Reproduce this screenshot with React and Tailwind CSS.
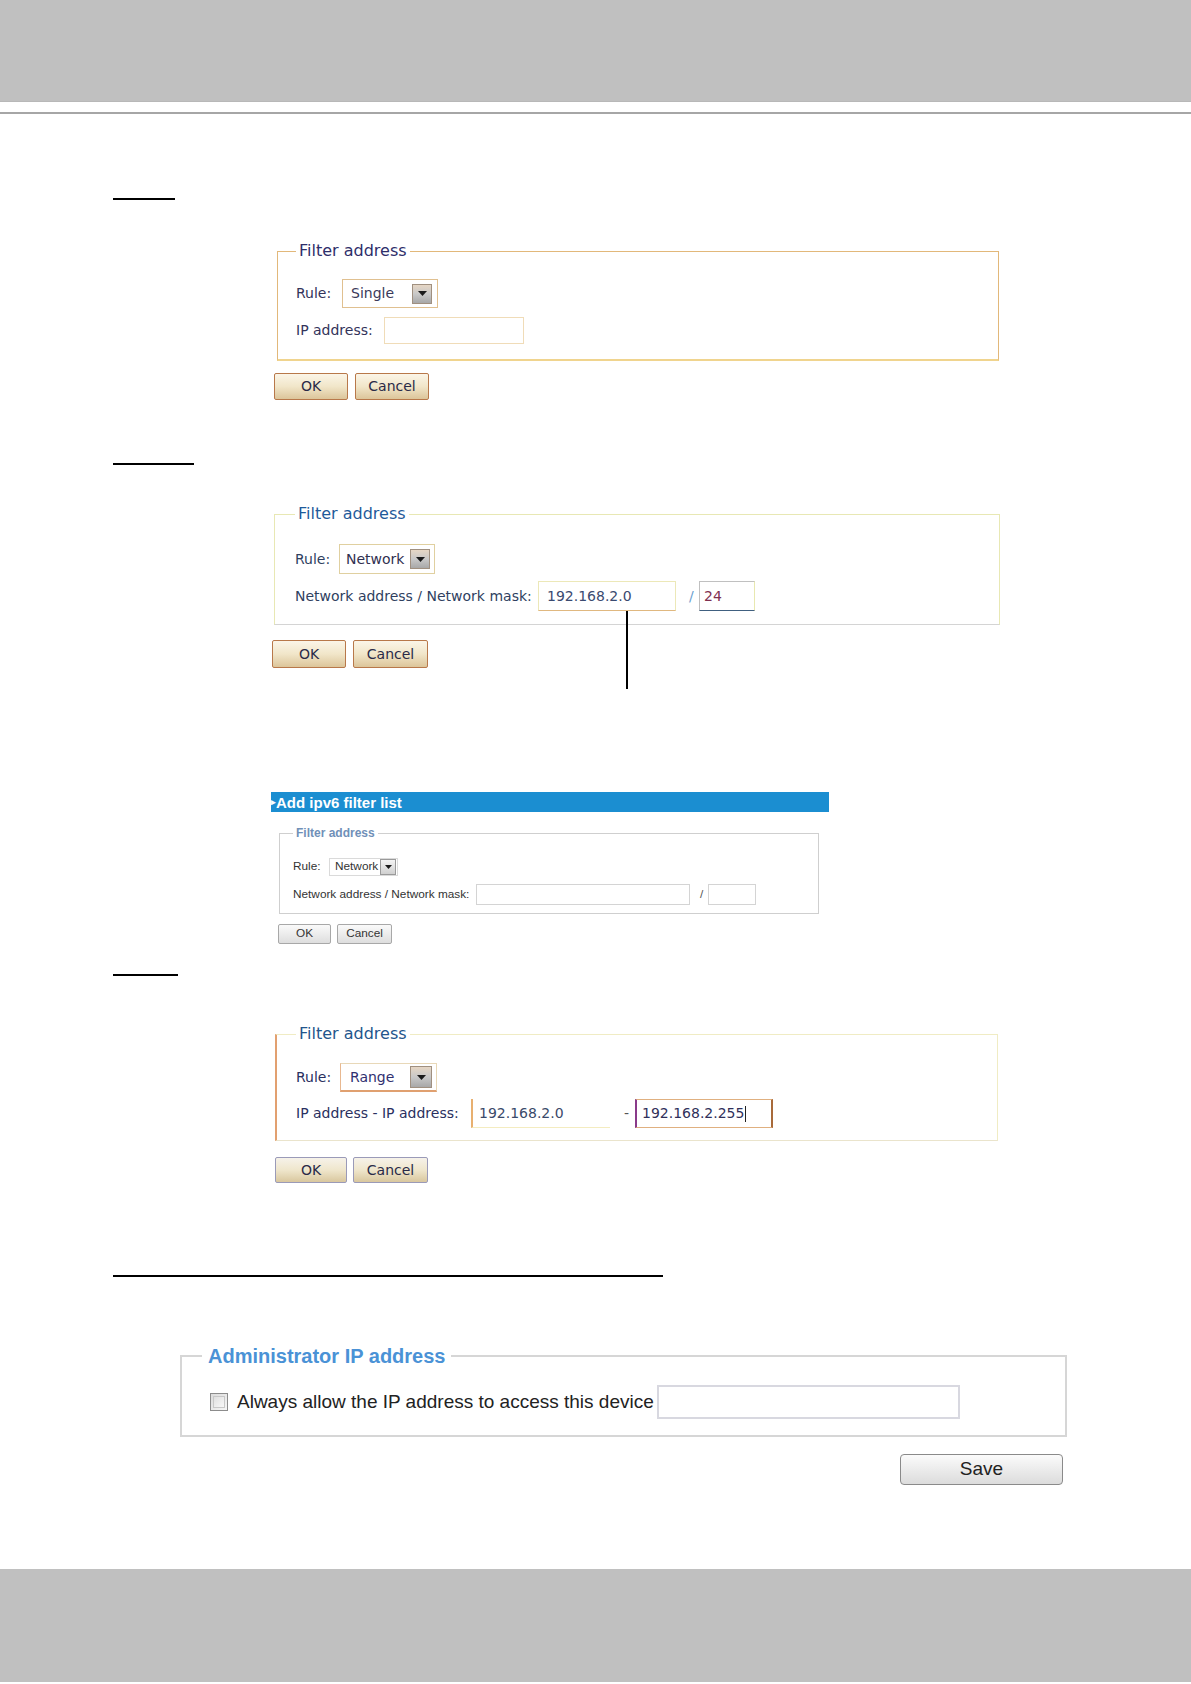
const dv = { fontFamily: '"DejaVu Sans", Verdana, sans-serif' };
const lib = { fontFamily: '"Liberation Sans", Arial, sans-serif' };

const Arrow = ({ size = 20, small = false }) => (
  <div
    className={`flex items-center justify-center border ${small ? 'border-[#9a9a9a] bg-linear-to-b from-[#f4f4f4] to-[#d0d0d0]' : 'border-[#a09080] bg-linear-to-b from-[#e6d6c4] via-[#c8c8c8] to-[#a8a8a8]'}`}
    style={{ width: size, height: size }}
  >
    <svg width={small ? 7 : 9} height={small ? 4 : 5} viewBox="0 0 9 5">
      <path d="M0 0 L9 0 L4.5 5 Z" fill="#1a1a1a" />
    </svg>
  </div>
);

const OldButton = ({ children, w, h, tone = 'orange' }) => (
  <div
    className={`flex items-center justify-center rounded-[2px] border text-[14px] text-[#2a2a48] ${
      tone === 'orange'
        ? 'border-[#b8784a] bg-linear-to-b from-[#fbf5e8] via-[#f1e6c9] to-[#dcc59a]'
        : 'border-[#9a9ab8] bg-linear-to-b from-[#f6f2ea] via-[#efe6cc] to-[#d9c79e]'
    }`}
    style={{ ...dv, width: w, height: h }}
  >
    {children}
  </div>
);

const Underline = ({ w, mt }) => (
  <div className="ml-[113px] h-[2px] bg-black" style={{ width: w, marginTop: mt }} />
);

export default function App() {
  return (
    <div className="w-[1191px] bg-white">
      {/* header band */}
      <div className="h-[102px] bg-[#c0c0c0] border-b border-[#b8b8b8]" />
      <div className="mt-[10px] h-[2px] bg-[#a6a6a6]" />

      {/* Single */}
      <Underline w={62} mt={84} />
      <fieldset
        className="mt-[42px] ml-[277px] w-[722px] h-[119px] border border-[#e2b87a] border-b-2 border-b-[#f0d48e] pl-[18px]"
        style={dv}
      >
        <legend className="px-[3px] text-[16px] leading-[18px] text-[#2e2e6a]">Filter address</legend>
        <div className="mt-[19px] flex items-center text-[14px] text-[#33335a]">
          <span className="w-[46px]">Rule:</span>
          <div className="flex h-[29px] w-[96px] items-center justify-between border border-[#e0c090] pl-[8px] pr-[5px] text-[#3a3a5a]">
            <span>Single</span>
            <Arrow />
          </div>
        </div>
        <div className="mt-[9px] flex items-center text-[14px] text-[#33335a]">
          <span className="w-[88px]">IP address:</span>
          <div className="h-[27px] w-[140px] border border-[#f0dcb8]" />
        </div>
      </fieldset>
      <div className="mt-[12px] ml-[274px] flex gap-[7px]">
        <OldButton w={74} h={27}>OK</OldButton>
        <OldButton w={74} h={27}>Cancel</OldButton>
      </div>

      {/* Network */}
      <Underline w={81} mt={63} />
      <fieldset
        className="mt-[40px] ml-[274px] w-[726px] h-[120px] border border-[#e8e8b4] border-b-[#d4d4d4] pl-[20px]"
        style={dv}
      >
        <legend className="px-[3px] text-[16px] leading-[18px] text-[#1f5a9a]">Filter address</legend>
        <div className="mt-[21px] flex items-center text-[14px] text-[#2f3f5f]">
          <span className="w-[44px]">Rule:</span>
          <div className="flex h-[30px] w-[96px] items-center justify-between border border-[#e0d0a0] pl-[6px] pr-[4px] text-[#303050]">
            <span>Network</span>
            <Arrow />
          </div>
        </div>
        <div className="mt-[7px] flex items-center text-[14px] text-[#2f3f5f]">
          <span className="w-[243px]">Network address / Network mask:</span>
          <div className="relative flex h-[30px] w-[138px] items-center border border-[#ece8b8] border-b-[#e0b880] pl-[8px] text-[#3a4a70]">
            192.168.2.0
            <div className="absolute left-[87px] top-[29px] h-[78px] w-[2px] bg-black" />
          </div>
          <span className="ml-[13px] w-[10px] text-[#6aa0d0]">/</span>
          <div className="flex h-[30px] w-[56px] items-center border border-[#c0c0c0] border-b-[#406080] border-r-[#e8e8b0] pl-[4px] text-[#803050]">
            24
          </div>
        </div>
      </fieldset>
      <div className="mt-[15px] ml-[272px] flex gap-[7px]">
        <OldButton w={74} h={28}>OK</OldButton>
        <OldButton w={75} h={28}>Cancel</OldButton>
      </div>

      {/* IPv6 snapshot */}
      <div
        className="mt-[124px] ml-[271px] flex h-[20px] w-[558px] items-center bg-[#1b8ed1] text-[15px] font-bold leading-none text-white"
        style={lib}
      >
        <span className="text-[9px]">▸</span>
        <span>Add ipv6 filter list</span>
      </div>
      <fieldset
        className="mt-[14px] ml-[279px] w-[540px] h-[88px] border border-[#cfcfcf] pl-[13px]"
        style={lib}
      >
        <legend className="px-[3px] text-[12px] font-bold leading-[14px] text-[#7090b8]">Filter address</legend>
        <div className="mt-[18px] flex items-center text-[11.8px] text-[#333]">
          <span className="w-[36px]">Rule:</span>
          <div className="flex h-[18px] w-[69px] items-center justify-between border border-[#dadada] pl-[5px] pr-[1px]">
            <span>Network</span>
            <Arrow size={16} small />
          </div>
        </div>
        <div className="mt-[8px] flex items-center text-[11.8px] text-[#333]">
          <span className="w-[183px]">Network address / Network mask:</span>
          <div className="h-[21px] w-[214px] border border-[#d4d4d4]" />
          <span className="ml-[10px] w-[8px] text-[#555]">/</span>
          <div className="h-[21px] w-[48px] border border-[#d4d4d4]" />
        </div>
      </fieldset>
      <div className="mt-[10px] ml-[278px] flex gap-[6px]" style={lib}>
        <div className="flex h-[20px] w-[53px] items-center justify-center rounded-[2px] border border-[#a8a8a8] bg-linear-to-b from-[#fafafa] to-[#dedede] text-[11.8px] text-[#333]">
          OK
        </div>
        <div className="flex h-[20px] w-[55px] items-center justify-center rounded-[2px] border border-[#a8a8a8] bg-linear-to-b from-[#fafafa] to-[#dedede] text-[11.8px] text-[#333]">
          Cancel
        </div>
      </div>

      {/* Range */}
      <Underline w={65} mt={30} />
      <fieldset
        className="mt-[49px] ml-[275px] w-[723px] h-[116px] border border-[#f0ecc4] border-l-[#e2a070] border-l-2 border-b-[#eae4cc] pl-[19px]"
        style={dv}
      >
        <legend className="px-[3px] text-[16px] leading-[18px] text-[#23558c]">Filter address</legend>
        <div className="mt-[20px] flex items-center text-[14px] text-[#2a3060]">
          <span className="w-[44px]">Rule:</span>
          <div className="flex h-[29px] w-[97px] items-center justify-between border border-[#e8d8b8] border-b-2 border-b-[#e0a070] border-l-[#e8b890] pl-[9px] pr-[4px] text-[#303070]">
            <span>Range</span>
            <Arrow size={22} />
          </div>
        </div>
        <div className="mt-[7px] flex items-center text-[14px] text-[#2a3060]">
          <span className="w-[175px]">IP address - IP address:</span>
          <div className="flex h-[29px] w-[139px] items-center border-l-2 border-b border-l-[#e8b070] border-b-[#f4ecc0] pl-[6px] text-[#3a4a6a]">
            192.168.2.0
          </div>
          <span className="ml-[14px] w-[11px] text-[#555]">-</span>
          <div className="flex h-[29px] w-[138px] items-center border border-[#e0b080] border-l-2 border-l-[#8a3a8a] border-r-2 border-r-[#a86a3a] pl-[5px] text-[#30305a]">
            192.168.2.255<span className="ml-[1px] h-[16px] w-[1px] bg-[#202020]" />
          </div>
        </div>
      </fieldset>
      <div className="mt-[16px] ml-[275px] flex gap-[6px]">
        <OldButton w={72} h={26} tone="blue">OK</OldButton>
        <OldButton w={75} h={26} tone="blue">Cancel</OldButton>
      </div>

      {/* Administrator IP */}
      <Underline w={550} mt={92} />
      <fieldset
        className="mt-[68px] ml-[180px] w-[887px] h-[92px] border-2 border-[#d6d6d6] pl-[20px]"
        style={lib}
      >
        <legend className="px-[6px] text-[20px] font-bold leading-[22px] text-[#4a92d6]">Administrator IP address</legend>
        <div className="mt-[18px] flex items-center text-[19px] text-[#222]">
          <div className="ml-[8px] h-[18px] w-[18px] border border-[#8c8c8c] bg-linear-to-br from-[#dcdcdc] to-[#f6f6f6] p-[2px]">
            <div className="h-full w-full border border-[#c8c8c8] bg-linear-to-br from-[#e0e0e0] to-[#f8f8f8]" />
          </div>
          <span className="ml-[9px]">Always allow the IP address to access this device</span>
          <div className="ml-[3px] h-[34px] w-[303px] border-2 border-[#d8d8e0]" />
        </div>
      </fieldset>
      <div className="mt-[17px] ml-[900px]" style={lib}>
        <div className="flex h-[31px] w-[163px] items-center justify-center rounded-[4px] border border-[#8a8a8a] bg-linear-to-b from-[#fbfbfb] to-[#dcdcdc] text-[19px] text-[#222]">
          Save
        </div>
      </div>

      {/* footer band */}
      <div className="mt-[84px] h-[113px] bg-[#c0c0c0]" />
    </div>
  );
}
